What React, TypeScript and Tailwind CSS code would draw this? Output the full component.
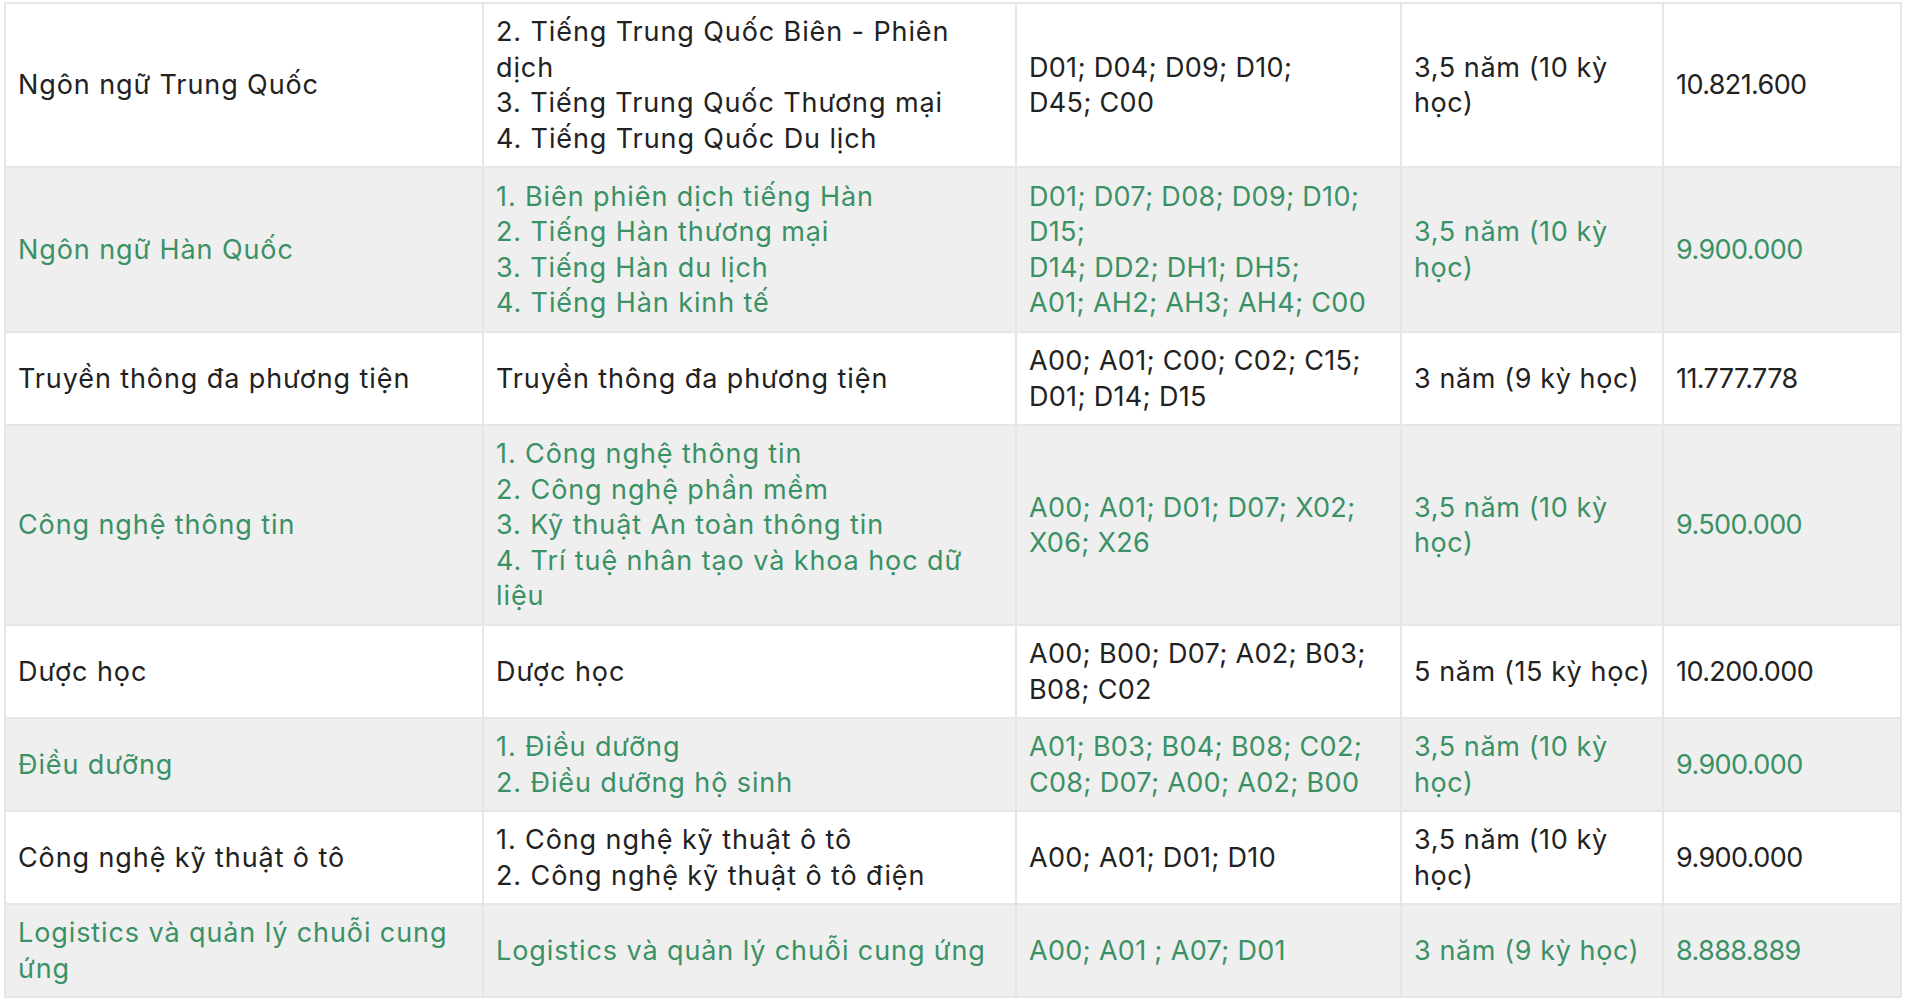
import React from "react";

type Row = {
  h: string;
  green: boolean;
  cols: string[][];
};

const rows: Row[] = [
  {
    h: "h-[164px]",
    green: false,
    cols: [
      ["Ngôn ngữ Trung Quốc"],
      ["2. Tiếng Trung Quốc Biên - Phiên", "dịch", "3. Tiếng Trung Quốc Thương mại", "4. Tiếng Trung Quốc Du lịch"],
      ["D01; D04; D09; D10;", "D45; C00"],
      ["3,5 năm (10 kỳ", "học)"],
      ["10.821.600"],
    ],
  },
  {
    h: "h-[165px]",
    green: true,
    cols: [
      ["Ngôn ngữ Hàn Quốc"],
      ["1. Biên phiên dịch tiếng Hàn", "2. Tiếng Hàn thương mại", "3. Tiếng Hàn du lịch", "4. Tiếng Hàn kinh tế"],
      ["D01; D07; D08; D09; D10;", "D15;", "D14; DD2; DH1; DH5;", "A01; AH2; AH3; AH4; C00"],
      ["3,5 năm (10 kỳ", "học)"],
      ["9.900.000"],
    ],
  },
  {
    h: "h-[92px]",
    green: false,
    cols: [
      ["Truyền thông đa phương tiện"],
      ["Truyền thông đa phương tiện"],
      ["A00; A01; C00; C02; C15;", "D01; D14; D15"],
      ["3 năm (9 kỳ học)"],
      ["11.777.778"],
    ],
  },
  {
    h: "h-[200px]",
    green: true,
    cols: [
      ["Công nghệ thông tin"],
      ["1. Công nghệ thông tin", "2. Công nghệ phần mềm", "3. Kỹ thuật An toàn thông tin", "4. Trí tuệ nhân tạo và khoa học dữ", "liệu"],
      ["A00; A01; D01; D07; X02;", "X06; X26"],
      ["3,5 năm (10 kỳ", "học)"],
      ["9.500.000"],
    ],
  },
  {
    h: "h-[92px]",
    green: false,
    cols: [
      ["Dược học"],
      ["Dược học"],
      ["A00; B00; D07; A02; B03;", "B08; C02"],
      ["5 năm (15 kỳ học)"],
      ["10.200.000"],
    ],
  },
  {
    h: "h-[91px]",
    green: true,
    cols: [
      ["Điều dưỡng"],
      ["1. Điều dưỡng", "2. Điều dưỡng hộ sinh"],
      ["A01; B03; B04; B08; C02;", "C08; D07; A00; A02; B00"],
      ["3,5 năm (10 kỳ", "học)"],
      ["9.900.000"],
    ],
  },
  {
    h: "h-[92px]",
    green: false,
    cols: [
      ["Công nghệ kỹ thuật ô tô"],
      ["1. Công nghệ kỹ thuật ô tô", "2. Công nghệ kỹ thuật ô tô điện"],
      ["A00; A01; D01; D10"],
      ["3,5 năm (10 kỳ", "học)"],
      ["9.900.000"],
    ],
  },
  {
    h: "h-[92px]",
    green: true,
    cols: [
      ["Logistics và quản lý chuỗi cung", "ứng"],
      ["Logistics và quản lý chuỗi cung ứng"],
      ["A00; A01 ; A07; D01"],
      ["3 năm (9 kỳ học)"],
      ["8.888.889"],
    ],
  },
];

const widths = ["w-[478px]", "w-[533px]", "w-[385px]", "w-[262px]", "w-[238px]"];
// tracking per column: Montserrat in the original is wider on letters, narrower on digits
const tracks = [
  "tracking-[0.9px]",
  "tracking-[0.9px]",
  "tracking-[0.3px]",
  "tracking-[0.6px]",
  "tracking-[-0.6px]",
];

export default function App() {
  return (
    <div className="min-h-screen bg-white pl-[4px] pt-[2px] font-['Inter','Noto_Sans',sans-serif]">
      <table className="table-fixed border-collapse w-[1896px]">
        <colgroup>
          {widths.map((w, i) => (
            <col key={i} className={w} />
          ))}
        </colgroup>
        <tbody>
          {rows.map((r, i) => (
            <tr
              key={i}
              className={`${r.h} ${r.green ? "bg-[#efefef] text-[#3b9166]" : "bg-white text-[#222222]"}`}
            >
              {r.cols.map((lines, j) => (
                <td
                  key={j}
                  className={`border-2 border-[#e6e6e6] px-[12px] py-[10px] align-middle text-[27px] leading-[35.5px] whitespace-nowrap ${tracks[j]}`}
                >
                  {lines.map((l, k) => (
                    <div key={k}>{l}</div>
                  ))}
                </td>
              ))}
            </tr>
          ))}
        </tbody>
      </table>
    </div>
  );
}
